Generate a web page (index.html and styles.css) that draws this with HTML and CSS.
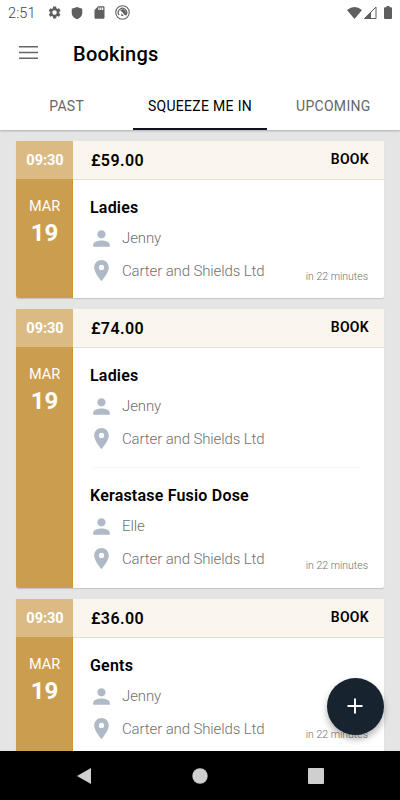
FILE: index.html
```html
<!DOCTYPE html>
<html lang="en">
<head>
  <meta charset="UTF-8">
  <meta name="viewport" content="width=device-width, initial-scale=1">
  <title>Bookings</title>
  <link rel="stylesheet" href="styles.css">
</head>
<body>
  <!-- shared icons -->
  <svg class="sprite" width="0" height="0">
    <symbol id="person" viewBox="0 0 24 24"><path d="M12 12c2.200 0 4-1.800 4-4s-1.800-4-4-4-4 1.800-4 4 1.800 4 4 4zm0 2c-2.700 0-8 1.300-8 4v2h16v-2c0-2.700-5.300-4-8-4z"/></symbol>
    <symbol id="place" viewBox="0 0 24 24"><path d="M12 2C8.100 2 5 5.100 5 9c0 5.200 7 13 7 13s7-7.800 7-13c0-3.900-3.100-7-7-7zm0 9.500a2.500 2.500 0 0 1 0-5 2.500 2.500 0 0 1 0 5z"/></symbol>
  </svg>

  <div class="screen">
    <header class="header">
      <div class="status-bar">
        <span class="clock">2:51</span>
        <div class="status-left">
          <svg viewBox="0 0 24 24" width="15" height="15"><path d="M19.400 13c.040-.300.060-.600.060-1s-.020-.700-.070-1l2-1.600c.200-.140.240-.400.120-.600l-1.900-3.300c-.120-.220-.370-.300-.600-.220l-2.400.960c-.500-.380-1-.700-1.600-.940L14.600 2.800c-.040-.240-.240-.400-.480-.400h-3.800c-.240 0-.430.170-.470.400L9.500 5.300c-.600.240-1.100.570-1.600.940l-2.400-.960c-.220-.080-.470 0-.590.220L3 8.800c-.120.200-.080.470.120.600l2 1.600c-.050.300-.090.700-.090 1s.020.700.070 1l-2 1.600c-.180.140-.230.400-.120.600l1.900 3.300c.120.220.370.300.590.220l2.400-.960c.500.380 1 .700 1.600.940l.360 2.500c.050.240.240.400.480.400h3.800c.240 0 .440-.170.470-.400l.360-2.500c.600-.240 1.100-.560 1.600-.940l2.400.960c.220.080.470 0 .590-.220l1.900-3.300c.120-.220.070-.470-.120-.600L19.400 13zM12 15.600a3.600 3.600 0 1 1 0-7.200 3.600 3.600 0 0 1 0 7.200z"/></svg>
          <svg viewBox="0 0 24 24" width="14" height="14"><path d="M12 1.500L3 4.700v6.800c0 5.300 3.800 9.700 9 11 5.200-1.300 9-5.700 9-11V4.700z"/></svg>
          <svg viewBox="0 0 24 24" width="15" height="15"><path d="M18 2h-8L4 8v12c0 1.100.9 2 2 2h12c1.100 0 2-.9 2-2V4c0-1.100-.9-2-2-2zm-6 6h-2V4h2v4zm3 0h-2V4h2v4zm3 0h-2V4h2v4z"/></svg>
          <svg viewBox="0 0 24 24" width="15" height="15"><circle cx="12" cy="12" r="10.800" fill="none" stroke="currentColor" stroke-width="1.700"/><path d="M6.500 16A6.700 6.700 0 1 1 17 16.500" fill="none" stroke="currentColor" stroke-width="2"/><path d="M8 8.500l5-2 4 3 1 6-3 .500-3-4.500zM10 13l4 4.500h-4z"/></svg>
        </div>
        <div class="status-right">
          <svg class="wifi" viewBox="0 0 15 12" width="15" height="12"><path d="M0 3Q7.500-3 15 3L7.500 12z"/></svg>
          <svg class="signal" viewBox="0 0 13 13" width="13" height="13"><path d="M.5 12.500L12 1v11.500z" fill="none" stroke="currentColor"/><path d="M0 13L7 6v7z"/></svg>
          <svg class="battery" viewBox="0 0 8 13" width="8" height="13"><path d="M2.500 0h3v1.300H7q1 0 1 1V12q0 1-1 1H1q-1 0-1-1V2.300q0-1 1-1h1.500z"/></svg>
        </div>
      </div>
      <div class="app-bar">
        <svg class="menu" viewBox="0 0 19 13" width="19" height="13"><path d="M0 .8h19M0 6.500h19M0 12.200h19"/></svg>
        <h1>Bookings</h1>
      </div>
      <nav class="tabs">
        <a class="tab">PAST</a>
        <a class="tab active">SQUEEZE ME IN</a>
        <a class="tab">UPCOMING</a>
      </nav>
    </header>

    <main class="list">
      <article class="card">
        <div class="date">
          <div class="time">09:30</div>
          <div class="month">MAR</div>
          <div class="day">19</div>
        </div>
        <div class="details">
          <div class="price-row"><span class="price">£59.00</span><span class="book">BOOK</span></div>
          <section class="service">
            <h2>Ladies</h2>
            <p class="person"><svg><use href="#person"/></svg>Jenny</p>
            <p class="place"><svg><use href="#place"/></svg>Carter and Shields Ltd<span class="due">in 22 minutes</span></p>
          </section>
        </div>
      </article>

      <article class="card">
        <div class="date">
          <div class="time">09:30</div>
          <div class="month">MAR</div>
          <div class="day">19</div>
        </div>
        <div class="details">
          <div class="price-row"><span class="price">£74.00</span><span class="book">BOOK</span></div>
          <section class="service">
            <h2>Ladies</h2>
            <p class="person"><svg><use href="#person"/></svg>Jenny</p>
            <p class="place"><svg><use href="#place"/></svg>Carter and Shields Ltd</p>
          </section>
          <hr class="divider">
          <section class="service extra">
            <h2>Kerastase Fusio Dose</h2>
            <p class="person"><svg><use href="#person"/></svg>Elle</p>
            <p class="place"><svg><use href="#place"/></svg>Carter and Shields Ltd<span class="due">in 22 minutes</span></p>
          </section>
        </div>
      </article>

      <article class="card">
        <div class="date">
          <div class="time">09:30</div>
          <div class="month">MAR</div>
          <div class="day">19</div>
        </div>
        <div class="details">
          <div class="price-row"><span class="price">£36.00</span><span class="book">BOOK</span></div>
          <section class="service">
            <h2>Gents</h2>
            <p class="person"><svg><use href="#person"/></svg>Jenny</p>
            <p class="place"><svg><use href="#place"/></svg>Carter and Shields Ltd<span class="due">in 22 minutes</span></p>
          </section>
        </div>
      </article>
    </main>

    <button class="fab" aria-label="New booking">
      <svg viewBox="0 0 16 16" width="16" height="16"><path d="M8 .5v15M.5 8h15"/></svg>
    </button>

    <footer class="nav-bar">
      <svg viewBox="0 0 16 18" width="16" height="18"><path d="M15 1v16L1 9z"/></svg>
      <svg viewBox="0 0 16 16" width="16" height="16"><circle cx="8" cy="8" r="7.700"/></svg>
      <svg viewBox="0 0 16 16" width="16" height="16"><rect width="16" height="16" rx="1"/></svg>
    </footer>
  </div>
</body>
</html>
```
FILE: styles.css
```css
* {
  box-sizing: border-box;
}
body {
  margin: 0;
  font-family: Roboto, Arial, sans-serif;
  color: #000;
  background: #e5e5e5;
}
h1, h2, p {
  margin: 0;
}
.sprite {
  position: absolute;
}
.screen {
  position: relative;
  display: flex;
  flex-direction: column;
  width: 400px;
  height: 800px;
  overflow: hidden;
}

/* header */
.header {
  height: 130px;
  background: #fff;
  box-shadow: 0 1px 2px rgba(0, 0, 0, 0.25);
}
.status-bar {
  display: flex;
  align-items: center;
  height: 25px;
  padding: 0 8px;
  color: #5f5f5f;
}
.status-bar svg {
  display: block;
  fill: currentColor;
  overflow: visible;
}
.clock {
  width: 39px;
  padding-top: 1px;
  font-size: 14.5px;
  font-weight: 300;
  letter-spacing: 0.1px;
  color: #444;
}
.status-left {
  display: flex;
  align-items: center;
  gap: 8px;
}
.status-right {
  display: flex;
  align-items: center;
  margin-left: auto;
}
.signal {
  margin: 0 7px 0 2px;
}
.app-bar {
  display: flex;
  align-items: center;
  height: 57px;
  padding-left: 19px;
}
.menu {
  margin-bottom: 2px;
  fill: none;
  stroke: #666;
  stroke-width: 1.5;
}
.app-bar h1 {
  margin-left: 35px;
  font-size: 20px;
  font-weight: 500;
  letter-spacing: 0.25px;
}
.tabs {
  display: flex;
  height: 48px;
}
.tab {
  flex: 1;
  padding-top: 2px;
  border-bottom: 2px solid transparent;
  font-size: 14px;
  line-height: 45px;
  letter-spacing: 0.3px;
  text-align: center;
  white-space: nowrap;
  color: #666;
}
.tab.active {
  color: #000;
  border-color: #10131f;
}

/* booking cards */
.list {
  flex: 1;
  min-height: 0;
  padding: 11px 16px 0;
  overflow: hidden;
}
.card {
  display: flex;
  margin-bottom: 11px;
  background: #fff;
  border-radius: 2px;
  box-shadow: 0 1px 1px rgba(0, 0, 0, 0.15);
  overflow: hidden;
}
.date {
  width: 57px;
  padding-left: 1px;
  background: #cb9d4f;
  border-right: 1px solid #cf962e;
  color: #fff;
  text-align: center;
}
.time {
  height: 38px;
  margin: 0 -1px;
  padding-left: 1px;
  background: #dcba84;
  font-size: 14.5px;
  font-weight: 700;
  line-height: 39px;
}
.month {
  margin-top: 18px;
  font-size: 14.5px;
  line-height: 20px;
}
.day {
  font-size: 24px;
  font-weight: 700;
  line-height: 32px;
}
.details {
  flex: 1;
}
.price-row {
  display: flex;
  justify-content: space-between;
  height: 39px;
  padding: 0 15px 0 18px;
  background: #faf5ed;
  border-bottom: 1px solid #e2ddd7;
}
.price {
  font-size: 16px;
  font-weight: 600;
  line-height: 40px;
  letter-spacing: 0.4px;
}
.book {
  font-size: 14px;
  font-weight: 600;
  line-height: 37px;
  letter-spacing: 0.3px;
}
.service {
  padding: 17px 16px 15px 17px;
}
.service h2 {
  height: 21px;
  font-size: 16px;
  font-weight: 600;
  line-height: 22px;
  letter-spacing: 0.2px;
}
.service p {
  display: flex;
  align-items: center;
  font-size: 15px;
  font-weight: 300;
  letter-spacing: -0.12px;
  color: #6f6f6f;
}
.service p svg {
  width: 25px;
  height: 25px;
  margin: 0 8px 0 -1px;
  fill: #b0b9c7;
}
.person {
  height: 40px;
}
.place {
  height: 25px;
}
.service .due {
  margin: 11px 0 0 auto;
  font-size: 10.5px;
  letter-spacing: 0;
}
.divider {
  height: 1px;
  margin: 1px 23px 0 19px;
  border: 0;
  background: #f7f7f7;
}
.extra {
  padding-bottom: 17px;
}
.extra .due {
  margin-top: 13px;
}

/* floating button */
.fab {
  position: absolute;
  right: 16px;
  top: 678px;
  width: 57px;
  height: 57px;
  display: flex;
  align-items: center;
  justify-content: center;
  padding: 0 1px 1px 0;
  border: 0;
  border-radius: 50%;
  background: #172430;
  box-shadow: 0 4px 7px rgba(0, 0, 0, 0.3);
}
.fab svg {
  fill: none;
  stroke: #fff;
  stroke-width: 2;
}

/* android navigation */
.nav-bar {
  display: flex;
  align-items: center;
  gap: 100px;
  height: 49px;
  padding-left: 75.5px;
  background: #000;
}
.nav-bar svg {
  fill: #cfcfcf;
}
```
